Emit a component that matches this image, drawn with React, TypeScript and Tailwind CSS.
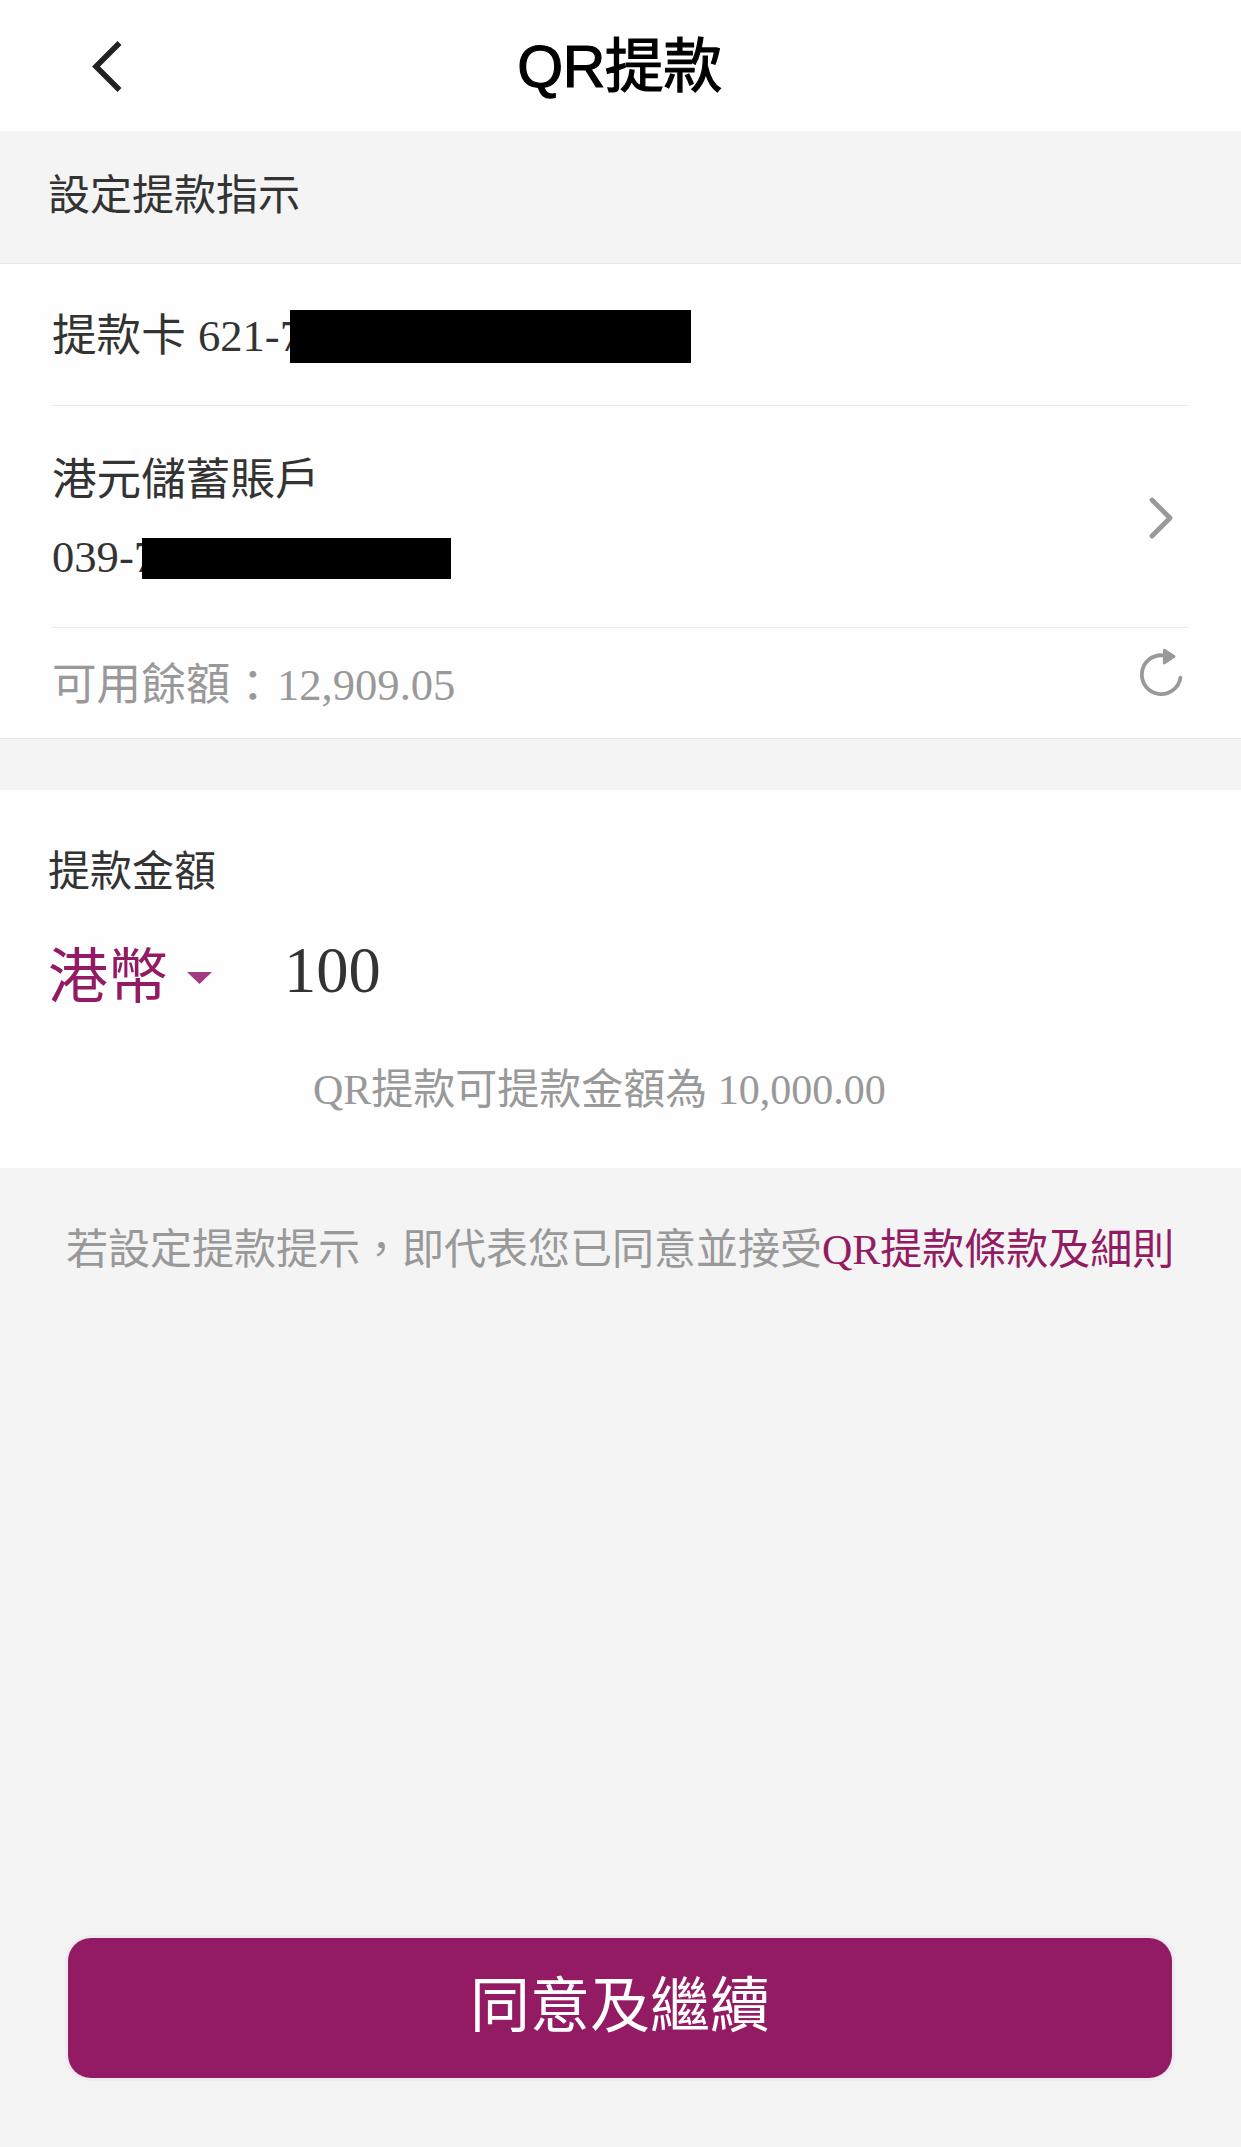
import { useState } from "react";

const account = {
  card: "621-7",
  name: "港元儲蓄賬戶",
  number: "039-7",
  balance: "12,909.05",
};

function BackIcon() {
  return (
    <svg className="h-[56px] w-[36px]" viewBox="0 0 36 56" fill="none">
      <path d="M30.5 5L7 28.5L30.5 52" stroke="#222222" strokeWidth={5.6} />
    </svg>
  );
}

function ChevronIcon() {
  return (
    <svg className="h-[44px] w-[26px]" viewBox="0 0 26 44" fill="none">
      <path d="M4 4L22 22L4 40" stroke="#97999b" strokeWidth={4.8} strokeLinecap="round" strokeLinejoin="round" />
    </svg>
  );
}

function RefreshIcon() {
  return (
    <svg className="h-[50px] w-[46px]" viewBox="0 0 46 50" fill="none">
      <path d="M42.4 30.7A19.4 19.4 0 1 1 25.5 8.4" stroke="#97999b" strokeWidth={3.8} strokeLinecap="round" />
      <path d="M26.4 3.2L36 9.4L26.4 15.8Z" fill="#97999b" stroke="#97999b" strokeWidth={3} strokeLinejoin="round" />
    </svg>
  );
}

export default function App() {
  const [amount, setAmount] = useState("100");

  return (
    <div
      lang="zh-Hant"
      className="flex h-[2147px] w-[1241px] flex-col bg-[#f3f3f3] font-['Liberation_Serif','Noto_Sans_CJK_TC',serif] text-[#333333]"
    >
      {/* Header */}
      <header className="grid h-[131px] grid-cols-[1fr_auto_1fr] items-center bg-white">
        <button className="justify-self-start pl-[89px]">
          <BackIcon />
        </button>
        <h1 className="pt-0.5 pr-0.5 font-['Liberation_Sans','Noto_Sans_CJK_TC',sans-serif] text-[59px] leading-[70px] tracking-[-0.5px] text-black [-webkit-text-stroke:1.2px_black]">
          QR提款
        </h1>
      </header>

      <div className="flex h-[133px] items-center border-b border-[#e8e8e8] bg-[#f4f4f4] pb-0.5 pl-12">
        <h2 className="text-[42px] leading-[60px]">設定提款指示</h2>
      </div>

      {/* Account */}
      <section className="h-[475px] border-b border-[#e8e8e8] bg-[#fefefe] pr-[53px] pl-[52px] text-[44.6px] leading-[60px]">
        <div className="relative flex h-[142px] items-center border-b border-[#e8e8e8] pt-0.5">
          <p>
            提款卡 <span className="ml-px">{account.card}</span>
          </p>
          <span className="absolute top-[46px] left-[238px] h-[53px] w-[401px] bg-black" />
        </div>
        <div className="flex h-[222px] items-center justify-between border-b border-[#e8e8e8] pt-1">
          <div className="flex flex-col gap-[17px]">
            <p>{account.name}</p>
            <p className="relative">
              {account.number}
              <span className="absolute top-[11px] left-[90px] h-[41px] w-[309px] bg-black" />
            </p>
          </div>
          <button className="pr-3.5 pb-0.5">
            <ChevronIcon />
          </button>
        </div>
        <div className="flex h-[110px] items-center justify-between text-[#999999]">
          <p className="pt-1">
            可用餘額<span className="relative top-0.5">：</span>
            <span className="ml-0.5">{account.balance}</span>
          </p>
          <button className="pr-1 pb-[22px]">
            <RefreshIcon />
          </button>
        </div>
      </section>

      {/* Amount */}
      <section className="h-[429px] border-t-[51px] border-[#f4f4f4] bg-[#fefefe] pt-[52px] pl-12">
        <h2 className="text-[42px] leading-[60px]">提款金額</h2>
        <div className="mt-[33px] flex h-[80px] items-center">
          <button className="flex w-[236px] items-center pt-1.5 text-[#931b63]">
            <span className="text-[60px] leading-[80px]">港幣</span>
            <svg className="ml-[19px] h-[12px] w-[25px]" viewBox="0 0 25 12">
              <path d="M0 0H25L12.5 12Z" fill="#a43a80" />
            </svg>
          </button>
          <input
            value={amount}
            onChange={(e) => setAmount(e.target.value)}
            className="h-[80px] w-[600px] bg-transparent pb-2 text-[64.5px] leading-[72px] outline-none"
          />
        </div>
        <p className="mt-[45px] pl-[265px] text-[42px] leading-[60px] text-[#999999]">
          QR提款可提款金額為 10,000.00
        </p>
      </section>

      <p className="h-[160px] bg-[#f4f4f4] pt-[52px] pl-[66px] text-[42px] leading-[60px] whitespace-nowrap text-[#999999]">
        若設定提款提示，即代表您已同意並接受
        <a className="text-[#931b63]">QR提款條款及細則</a>
      </p>

      <button className="mt-auto mb-[69px] ml-[68px] h-[140px] w-[1104px] rounded-[23px] bg-[#931b63] pb-[3px] text-[60px] leading-[80px] text-white ring-3 ring-[#ebebf0]">
        同意及繼續
      </button>
    </div>
  );
}
